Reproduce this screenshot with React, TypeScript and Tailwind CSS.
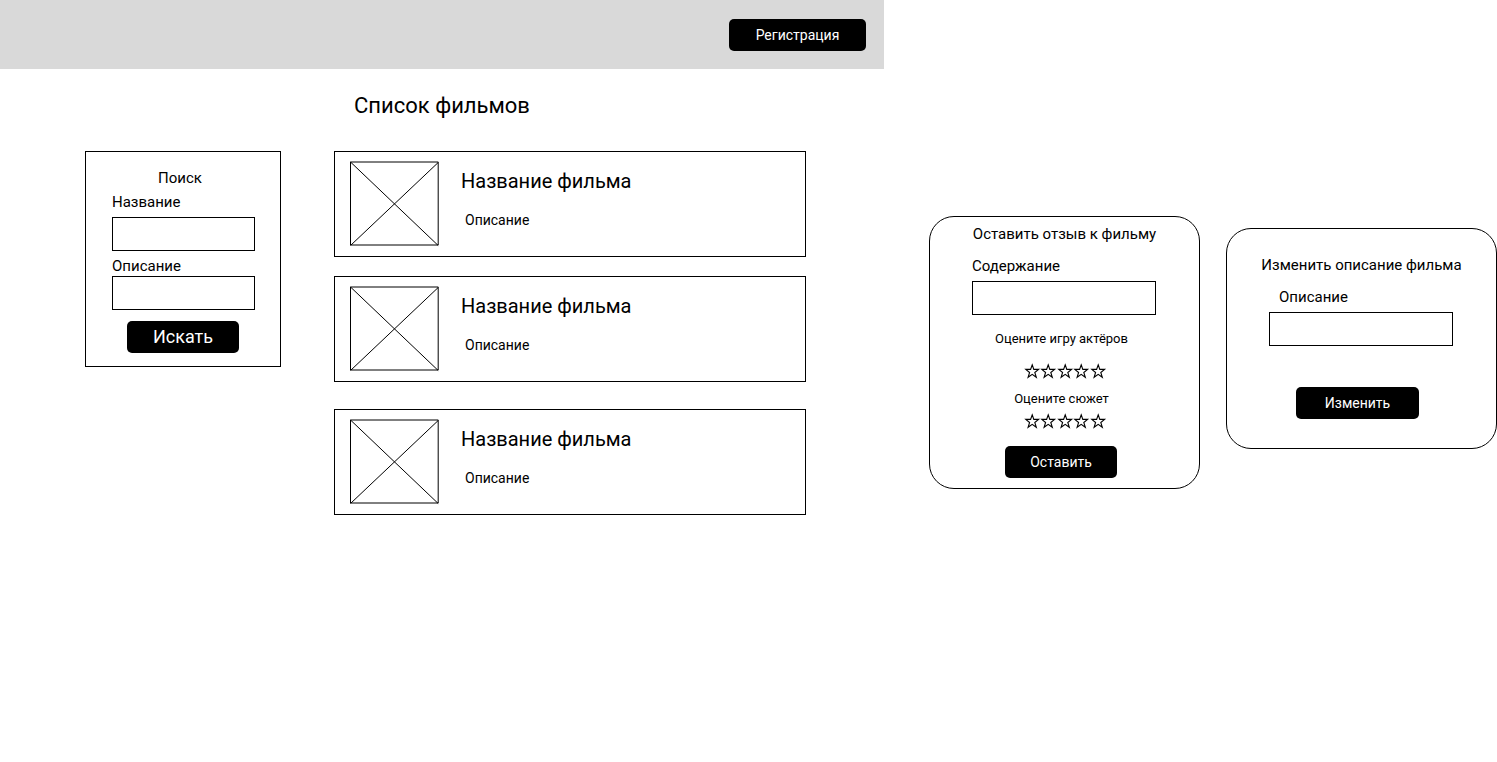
import { useState, type ReactNode } from "react";

const films = [
  { id: 1, title: "Название фильма", description: "Описание" },
  { id: 2, title: "Название фильма", description: "Описание" },
  { id: 3, title: "Название фильма", description: "Описание" },
];

function BlackButton({ className, children }: { className: string; children: ReactNode }) {
  return (
    <button type="button" className={`h-8 rounded-[5px] bg-black text-white ${className}`}>
      {children}
    </button>
  );
}

function Field({ id, label, labelClass = "" }: { id: string; label: string; labelClass?: string }) {
  return (
    <div className="flex flex-col">
      <label htmlFor={id} className={`text-[15px] leading-5 ${labelClass}`}>
        {label}
      </label>
      <input id={id} type="text" className="h-[34px] w-full border border-black bg-white px-2 text-sm" />
    </div>
  );
}

function PosterPlaceholder() {
  return (
    <svg width="90" height="86" viewBox="0 0 90 86" fill="none" stroke="black" className="shrink-0" aria-hidden="true">
      <path d="M0.5 1H88.2V84H0.5Z" />
      <path d="M0.5 1L88.2 84.5M88.2 1.5L0.5 84.5" />
    </svg>
  );
}

function Rating({ name, label, className }: { name: string; label: string; className: string }) {
  const [value, setValue] = useState(0);
  return (
    <div role="radiogroup" aria-label={label} className={`flex w-[82px] justify-between self-center ${className}`}>
      {[1, 2, 3, 4, 5].map((n) => (
        <label key={n} className="relative block size-4 cursor-pointer">
          <input
            type="radio"
            name={name}
            value={n}
            aria-label={`${n}`}
            checked={value === n}
            onChange={() => setValue(n)}
            className="absolute inset-0 size-4 cursor-pointer appearance-none"
          />
          <svg
            viewBox="0 0 16 16"
            className="size-4 overflow-visible"
            fill={n <= value ? "black" : "none"}
            stroke="black"
            strokeWidth="1.1"
            aria-hidden="true"
          >
            <path d="M8.2 1.8L9.8 6.4H14.6L10.8 9.5L12.3 14.3L8.2 11.4L4.1 14.3L5.6 9.5L1.8 6.4H6.6Z" />
          </svg>
        </label>
      ))}
    </div>
  );
}

function FilmCard({ title, description }: { title: string; description: string }) {
  return (
    <article className="flex h-[106px] border border-black pt-[9px] pl-[15px]">
      <PosterPlaceholder />
      <div className="pt-1.5 pl-[21px]">
        <h2 className="text-xl leading-7">{title}</h2>
        <p className="mt-[15px] pl-1 text-sm leading-5">{description}</p>
      </div>
    </article>
  );
}

export default function App() {
  return (
    <div className="flex min-h-screen bg-white font-[Roboto,sans-serif] text-black">
      <div className="min-w-0 flex-1">
        <header className="flex h-[69px] items-center justify-end bg-[#d9d9d9] pr-[18px]">
          <BlackButton className="w-[137px] text-sm">Регистрация</BlackButton>
        </header>
        <main>
          <h1 className="mt-[21px] text-center text-[22px] leading-8">Список фильмов</h1>
          <div className="mt-[29px] flex items-start gap-[53px] pr-[78px] pl-[85px]">
            <form className="flex w-[196px] shrink-0 flex-col border border-black pt-4 pr-[25px] pb-[13px] pl-[26px]">
              <h2 className="pr-[7px] text-center text-[15px] leading-5">Поиск</h2>
              <div className="mt-1">
                <Field id="search-title" label="Название" labelClass="mb-[5px]" />
              </div>
              <div className="mt-[5px]">
                <Field id="search-description" label="Описание" />
              </div>
              <div className="mt-[11px] flex justify-center pr-px">
                <BlackButton className="w-28 text-lg">Искать</BlackButton>
              </div>
            </form>
            <section className="flex min-w-0 flex-1 flex-col gap-[19px]">
              {films.slice(0, 2).map((film) => (
                <FilmCard key={film.id} title={film.title} description={film.description} />
              ))}
              <div className="pt-2">
                <FilmCard title={films[2].title} description={films[2].description} />
              </div>
            </section>
          </div>
        </main>
      </div>

      <aside className="flex shrink-0 items-start gap-[26px] pl-[45px]">
        <form className="mt-[216px] flex w-[271px] flex-col rounded-[25px] border border-black pt-[7px] pb-2.5">
          <h2 className="text-center text-[15px] leading-5">Оставить отзыв к фильму</h2>
          <div className="mt-3 pr-[43px] pl-[42px]">
            <Field id="review-text" label="Содержание" labelClass="mb-[5px]" />
          </div>
          <p className="mt-3.5 pr-1.5 text-center text-[13px] leading-5">Оцените игру актёров</p>
          <Rating name="acting" label="Оцените игру актёров" className="mt-3.5" />
          <p className="mt-2.5 pr-1.5 text-center text-[13px] leading-5">Оцените сюжет</p>
          <Rating name="plot" label="Оцените сюжет" className="mt-1" />
          <div className="mt-[17px] flex justify-center pr-[7px]">
            <BlackButton className="w-28 text-sm">Оставить</BlackButton>
          </div>
        </form>

        <form className="mt-[228px] flex w-[271px] flex-col rounded-[25px] border border-black pt-[26px] pb-[29px]">
          <h2 className="text-center text-[15px] leading-5">Изменить описание фильма</h2>
          <div className="mt-3 pr-[43px] pl-[42px]">
            <Field id="edit-description" label="Описание" labelClass="mb-[5px] pl-2.5" />
          </div>
          <div className="mt-[41px] flex justify-center pr-2">
            <BlackButton className="w-[123px] text-sm">Изменить</BlackButton>
          </div>
        </form>
      </aside>
    </div>
  );
}
